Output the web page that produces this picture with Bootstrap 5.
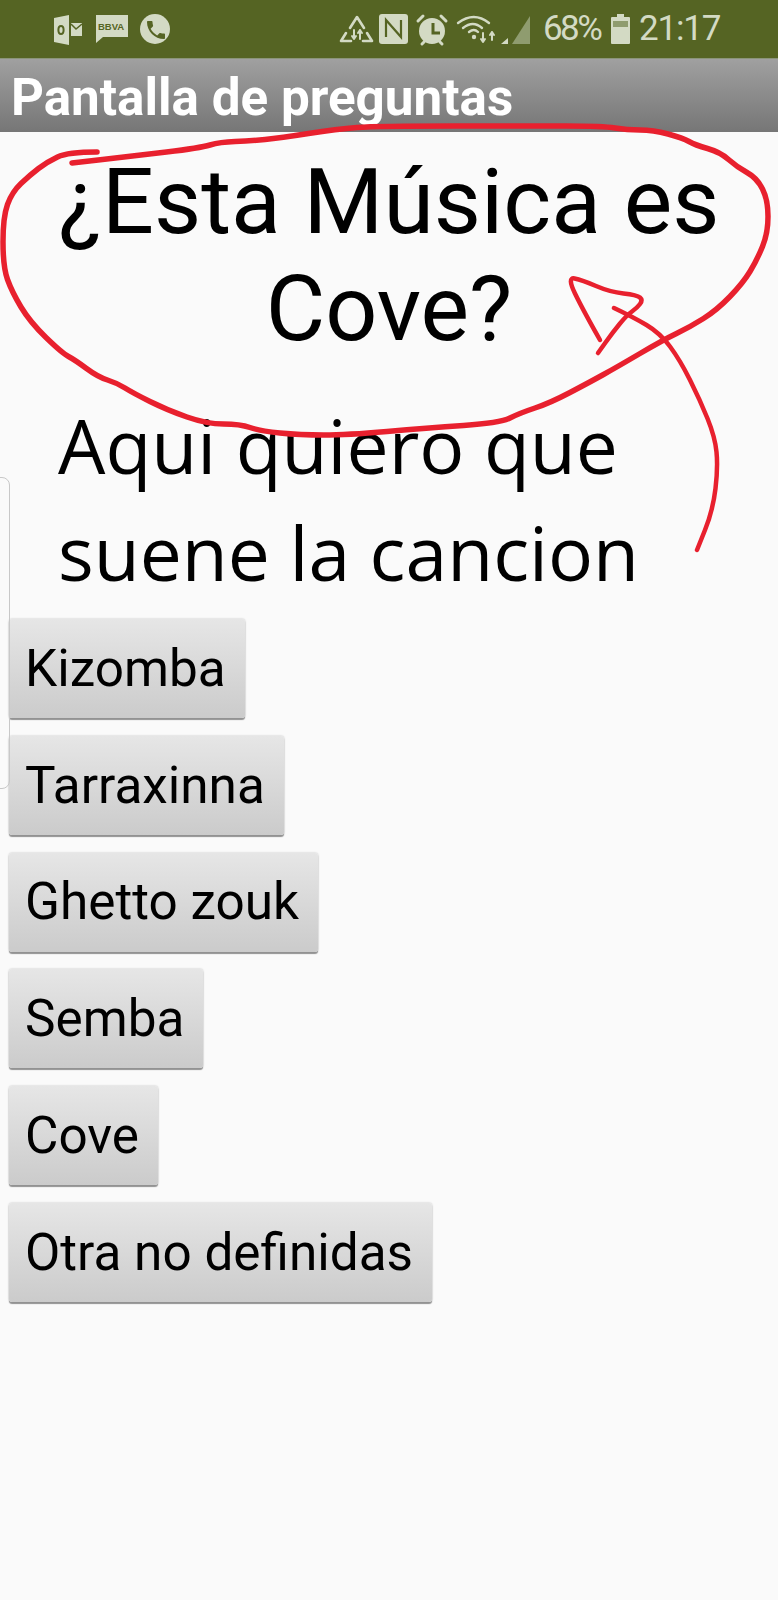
<!DOCTYPE html>
<html lang="es">
<head>
  <meta charset="UTF-8" />
  <meta name="viewport" content="width=device-width, initial-scale=1.0" />
  <title>Pantalla de preguntas</title>
  <link href="https://cdn.jsdelivr.net/npm/bootstrap@5.3.0/dist/css/bootstrap.min.css" rel="stylesheet" />
  <style>
    body {
      background-color: #fafafa;
      font-family: Roboto, sans-serif;
      color: #000;
      height: 1600px;
      overflow: hidden;
    }

    .status-strip {
      height: 58px;
      background-color: #556423;
      color: #d3dac4;
      padding: 0 57px 0 54px;
      font-size: 35px;
      letter-spacing: -2.6px;
    }

    .status-strip svg {
      display: block;
    }

    .status-strip .ink {
      fill: #d3dac4;
    }

    .status-strip .cut {
      fill: #556423;
    }

    .status-strip .line {
      fill: none;
      stroke: #d3dac4;
      stroke-linecap: round;
      stroke-linejoin: round;
    }

    .status-strip .cutline {
      fill: none;
      stroke: #556423;
    }

    .status-strip .dim {
      fill: #8f9c6f;
    }

    .bank-label {
      font-family: "Liberation Sans", sans-serif;
      font-size: 9.5px;
      font-weight: 700;
      letter-spacing: 0;
      fill: #556423;
    }

    .level-text {
      width: 60px;
      margin-left: 9px;
    }

    .clock-text {
      width: 82px;
      letter-spacing: -1.2px;
    }

    .title-strip {
      height: 74px;
      background: linear-gradient(#a0a0a0, #767676);
      border-top: 1px solid #8b9579;
      padding-left: 11px;
      color: #fff;
      font-size: 51.2px;
      font-weight: 700;
      line-height: 77px;
      white-space: nowrap;
    }

    .question-text {
      font-size: 91.5px;
      line-height: 107px;
      text-align: center;
      padding: 16px 40px 0;
      margin: 0;
      font-weight: 400;
    }

    .audio-text {
      font-family: "Open Sans", sans-serif;
      font-size: 75px;
      line-height: 107px;
      padding: 30px 58px 0;
      margin: 0;
    }

    .answer-btn {
      height: 99px;
      padding: 0 19px 0 16px;
      border: 0;
      border-radius: 3px;
      background: linear-gradient(#e6e6e6, #cbcbcb);
      box-shadow: 0 2px 1px #929292, 0 0 2px #b5b5b5;
      color: #000;
      font-family: Roboto, sans-serif;
      font-size: 51.3px;
      line-height: 1;
    }

    .answer-stack {
      gap: 17.8px;
      padding: 13px 0 0 9px;
    }

    .side-handle {
      position: absolute;
      left: -20px;
      top: 477px;
      width: 30px;
      height: 312px;
      border: 1px solid #c8c8c8;
      border-radius: 8px;
    }

    .pen-layer {
      position: absolute;
      left: 0;
      top: 0;
      width: 778px;
      height: 1600px;
      pointer-events: none;
    }

    .pen-layer path {
      fill: none;
      stroke: #e8202e;
      stroke-linecap: round;
      stroke-linejoin: round;
    }
  </style>
</head>

<body>

  <div class="status-strip d-flex align-items-center justify-content-between">
    <svg width="118" height="58" viewBox="54 0 118 58">
      <path class="ink" d="M54 18 69 15v30l-15-3zM71 23h11v13H71z"/>
      <path class="cutline" stroke-width="1.5" d="M71 24l5 5 6-5"/>
      <ellipse class="cutline" stroke-width="2" cx="61" cy="30" rx="2.6" ry="4"/>
      <path class="ink" d="M96 15h32v22h-25l-7 6z"/>
      <text class="bank-label" x="98" y="30">BBVA</text>
      <circle class="ink" cx="155" cy="29" r="15"/>
      <path class="cut" transform="translate(144 18)" d="M6.62 10.79c1.44 2.83 3.76 5.14 6.59 6.59l2.2-2.2c.27-.27.67-.36 1.02-.24 1.12.37 2.33.57 3.57.57.55 0 1 .45 1 1V20c0 .55-.45 1-1 1-9.39 0-17-7.61-17-17 0-.55.45-1 1-1h3.5c.55 0 1 .45 1 1 0 1.25.2 2.45.57 3.57.11.35.03.74-.25 1.02l-2.2 2.2z"/>
    </svg>
    <div class="d-flex align-items-center">
      <svg width="195" height="58" viewBox="340 0 195 58">
        <path class="line" stroke-width="2.6" d="M351 28 358 17 365 28M347 33 342 41 352 41M364 41 373 41 368 33"/>
        <path class="line" stroke-width="2" d="M355 30V39M353 36l2 3 2-3M361 39V30M359 33l2-3 2 3"/>
        <rect class="ink" x="380" y="14" width="29" height="30" rx="3"/>
        <path class="cutline" stroke-width="2.2" d="M387 37V20L402 37V20"/>
        <circle class="ink" cx="433" cy="31" r="13"/>
        <path class="line" stroke-width="3" d="M419 21 424 16M447 21 442 16M423 44l2-2M443 44l-2-2"/>
        <path class="cutline" stroke-width="3" d="M434 23V33H441"/>
        <path class="line" stroke-width="2.4" d="M459 23Q475 11 490 23M464 28Q474 20 483 28M470 32Q475 28 479 32"/>
        <circle class="ink" cx="475" cy="37" r="2.2"/>
        <path class="line" stroke-width="2" d="M484 33V42M482 39l2 3 2-3M493 40V32M491 35l2-3 2 3"/>
        <path class="ink" d="M502 44h7v-6z"/>
        <path class="dim" d="M513 44h18V16z"/>
      </svg>
      <span class="level-text">68%</span>
      <svg class="ms-2" width="20" height="58" viewBox="612 0 20 58">
        <path class="ink" d="M618 14h7v3h5a1 1 0 0 1 1 1v25a1 1 0 0 1-1 1h-17a1 1 0 0 1-1-1V18a1 1 0 0 1 1-1h5z"/>
        <rect class="dim" x="614" y="21" width="15" height="6"/>
      </svg>
      <span class="clock-text ms-2">21:17</span>
    </div>
  </div>

  <div class="title-strip">Pantalla de preguntas</div>

  <h1 class="question-text">¿Esta Música es Cove?</h1>
  <p class="audio-text">Aqui quiero que suene la cancion</p>

  <div class="answer-stack d-flex flex-column align-items-start">
    <button type="button" class="btn answer-btn">Kizomba</button>
    <button type="button" class="btn answer-btn">Tarraxinna</button>
    <button type="button" class="btn answer-btn">Ghetto zouk</button>
    <button type="button" class="btn answer-btn">Semba</button>
    <button type="button" class="btn answer-btn">Cove</button>
    <button type="button" class="btn answer-btn">Otra no definidas</button>
  </div>

  <div class="side-handle"></div>

  <svg class="pen-layer" viewBox="0 0 778 1600">
    <path stroke-width="5.5" data-pts="97,152 68,152 47,162 30,175 12,192 3,217 3,267 12,292 30,322 62,353 75,360 98,377 117,383 133,393 167,410 207,424 240,424 260,431 300,435 347,435 427,428 500,423 520,413 550,403 590,382 617,367 663,340 690,327 717,310 743,283 757,260 768,233 768,200 757,178 737,167 720,152 695,145 683,138 653,130 627,130 603,126 530,126 377,126 337,129 280,138 250,141 220,142 200,148 133,156 72,163"></path>
    <path stroke-width="4.5" data-pts="600,340 583,310 567,277 582,280 610,292 637,295 643,300 637,308 627,315 613,332 598,353"></path>
    <path stroke-width="4.5" data-pts="614,308 633,317 660,333 680,360 700,400 715,437 718,467 713,510 697,550"></path>
  </svg>

  <script>
    // hand drawn strokes: smooth the point lists with midpoints
    document.querySelectorAll(".pen-layer path").forEach(stroke => {
      const pts = stroke.dataset.pts.split(" ").map(p => p.split(",").map(Number));
      let d = `M${pts[0][0]} ${pts[0][1]}`;
      for (let i = 1; i < pts.length - 1; i++) {
        const midX = (pts[i][0] + pts[i + 1][0]) / 2;
        const midY = (pts[i][1] + pts[i + 1][1]) / 2;
        d += ` Q${pts[i][0]} ${pts[i][1]} ${midX} ${midY}`;
      }
      const last = pts[pts.length - 1];
      stroke.setAttribute("d", d + ` L${last[0]} ${last[1]}`);
    });
  </script>

</body>
</html>
